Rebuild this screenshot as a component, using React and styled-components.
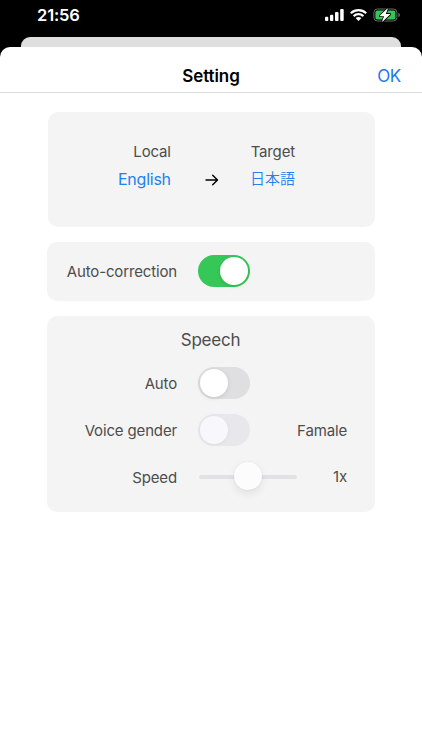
import React, { useState } from "react";
import styled, { createGlobalStyle } from "styled-components";

export default function App() {
  const [correction, setCorrection] = useState(true);
  const [auto, setAuto] = useState(false);

  return (
    <Screen>
      <GlobalStyle />
      <StatusBar>
        <Clock>21:56</Clock>
        <StatusIcons>
          <SignalIcon />
          <WifiIcon />
          <BatteryIcon />
        </StatusIcons>
      </StatusBar>
      <BackSheet />
      <Sheet>
        <Header>
          <Title>Setting</Title>
          <OkButton>OK</OkButton>
        </Header>
        <Cards>
          <LanguageCard>
            <Language>
              <Label>Local</Label>
              <LanguageButton>English</LanguageButton>
            </Language>
            <ArrowIcon />
            <Language>
              <Label>Target</Label>
              <LanguageButton $cjk>日本語</LanguageButton>
            </Language>
          </LanguageCard>

          <CorrectionCard>
            <Row>
              <Label>Auto-correction</Label>
              <Toggle $on={correction} onClick={() => setCorrection(!correction)}>
                <Thumb />
              </Toggle>
            </Row>
          </CorrectionCard>

          <SpeechCard>
            <CardTitle>Speech</CardTitle>
            <Row>
              <Label>Auto</Label>
              <Toggle $on={auto} onClick={() => setAuto(!auto)}>
                <Thumb />
              </Toggle>
            </Row>
            <Row>
              <Label>Voice gender</Label>
              <Toggle disabled>
                <Thumb $disabled />
              </Toggle>
              <Label>Famale</Label>
            </Row>
            <SpeedRow>
              <SpeedLabel>Speed</SpeedLabel>
              <Slider>
                <Knob />
              </Slider>
              <Label>1x</Label>
            </SpeedRow>
          </SpeechCard>
        </Cards>
      </Sheet>
    </Screen>
  );
}

/* icons */
const SignalIcon = () => (
  <svg width="19" height="12" viewBox="0 0 19 12" fill="#fff">
    <rect x="0" y="7.800" width="3.300" height="4.200" rx="1" />
    <rect x="5" y="5.800" width="3.300" height="6.200" rx="1" />
    <rect x="10" y="3" width="3.500" height="9" rx="1" />
    <rect x="15.200" y="0" width="3.500" height="12" rx="1" />
  </svg>
);

const WifiIcon = () => (
  <svg width="17" height="12" viewBox="0 0 17 12" fill="#fff">
    <path d="M8.500 0C5.300 0 2.500 1.200.3 3.200c-.2.2-.2.4 0 .6l1 1c.2.2.4.2.6 0a9.600 9.600 0 0 1 13.200 0c.2.2.4.2.6 0l1-1c.2-.2.2-.4 0-.6A12 12 0 0 0 8.500 0z" />
    <path d="M8.500 4a7.700 7.700 0 0 0-5.300 2.100c-.2.2-.2.4 0 .6l1 1c.2.2.4.2.6 0a5.400 5.400 0 0 1 7.400 0c.2.2.4.2.6 0l1-1c.2-.2.2-.4 0-.6A7.700 7.700 0 0 0 8.500 4z" />
    <path d="M8.500 7.900c-1 0-1.800.4-2.500.9-.2.2-.2.4 0 .6l2.200 2.300c.2.2.4.2.6 0L11 9.400c.2-.2.2-.4 0-.6-.7-.5-1.500-.9-2.500-.9z" />
  </svg>
);

const BatteryIcon = () => (
  <svg width="28" height="14" viewBox="0 0 28 14">
    <rect x=".9" y="1" width="23" height="12" rx="3.500" fill="none" stroke="#6c6c6c" />
    <rect x="2.400" y="2.500" width="20" height="9" rx="2" fill="#33c759" />
    <path d="M25.400 5c1 .4 1.400 1.200 1.400 2s-.4 1.600-1.400 2z" fill="#777" />
    <path
      d="M14 .7 6.900 7.600c-.3.300-.1.700.3.700h3.900l-2 4.900c-.2.500.3.700.6.400l7.400-7c.3-.3.100-.7-.3-.7h-4l2-4.800c.2-.5-.5-.700-.8-.4z"
      fill="#fff"
      stroke="#000"
      strokeWidth="1.600"
      paintOrder="stroke"
    />
  </svg>
);

const ArrowIcon = () => (
  <Arrow width="14" height="12" viewBox="0 0 14 12">
    <path
      d="M1 6h11.500M7.700 1.200 12.500 6l-4.800 4.800"
      fill="none"
      stroke="#000"
      strokeWidth="1.400"
      strokeLinecap="round"
      strokeLinejoin="round"
    />
  </Arrow>
);

const GlobalStyle = createGlobalStyle`
  * {
    box-sizing: border-box;
  }
  body {
    margin: 0;
    background: #000;
    font-family: Inter, "Noto Sans CJK JP", sans-serif;
  }
  button {
    padding: 0;
    border: 0;
    background: none;
    font: inherit;
  }
`;

const Screen = styled.div`
  display: flex;
  flex-direction: column;
  width: 422px;
  height: 750px;
  overflow: hidden;
  background: #000;
`;

const StatusBar = styled.div`
  display: flex;
  justify-content: space-between;
  align-items: center;
  height: 37px;
  padding: 0 21px 7px 37px;
`;

const Clock = styled.div`
  color: #fff;
  font-size: 16.500px;
  font-weight: 600;
  letter-spacing: -0.15px;
`;

const StatusIcons = styled.div`
  display: flex;
  align-items: center;
  gap: 6px;
`;

const BackSheet = styled.div`
  flex: none;
  height: 20px;
  margin: 0 21px -10px;
  border-radius: 9px 9px 0 0;
  background: #dfdfdf;
`;

const Sheet = styled.div`
  flex: 1;
  z-index: 1;
  border-radius: 10px 10px 0 0;
  background: #fff;
`;

const Header = styled.div`
  display: grid;
  grid-template-columns: 1fr auto 1fr;
  align-items: center;
  height: 46px;
  padding: 13px 21px 0;
  border-bottom: 1px solid #dcdcdc;
`;

const Title = styled.div`
  grid-column: 2;
  color: #000;
  font-size: 17px;
  font-weight: 600;
  letter-spacing: -0.1px;
`;

const OkButton = styled.button`
  justify-self: end;
  color: #1e77ee;
  font-size: 17px;
  letter-spacing: -0.3px;
`;

const Cards = styled.div`
  display: flex;
  flex-direction: column;
  gap: 15px;
  padding: 19px 47px 0;
`;

const Card = styled.div`
  border-radius: 10px;
  background: #f4f4f4;
`;

const LanguageCard = styled(Card)`
  display: flex;
  align-items: flex-start;
  height: 115px;
  margin-left: 1px;
  padding: 30px 80px 0 70px;
`;

const Language = styled.div`
  display: flex;
  flex-direction: column;
  align-items: flex-end;
  gap: 7px;
`;

const Label = styled.div`
  color: #4d4d4d;
  font-size: 15px;
  line-height: 20px;
  letter-spacing: -0.15px;
  white-space: nowrap;
`;

const LanguageButton = styled.button`
  color: #267ff0;
  font-size: ${(p) => (p.$cjk ? "15px" : "16px")};
  font-weight: ${(p) => (p.$cjk ? 350 : 400)};
  line-height: 20px;
  letter-spacing: ${(p) => (p.$cjk ? "0" : "-0.25px")};
`;

const Arrow = styled.svg`
  margin: 32px 31px 0 auto;
`;

const CorrectionCard = styled(Card)`
  display: flex;
  flex-direction: column;
  justify-content: center;
  height: 59px;
`;

const SpeechCard = styled(Card)`
  height: 196px;
  padding-top: 13px;
`;

const CardTitle = styled.div`
  margin-bottom: 9px;
  color: #4d4d4d;
  font-size: 17px;
  line-height: 22px;
  letter-spacing: -0.25px;
  text-align: center;
  text-indent: -1px;
`;

const Row = styled.div`
  display: grid;
  grid-template-columns: 130px 100px 28px;
  column-gap: 21px;
  justify-items: end;
  align-items: center;
  height: 47px;
`;

const SpeedRow = styled(Row)`
  height: 45px;
`;

const Toggle = styled.button`
  display: flex;
  align-items: center;
  justify-self: start;
  justify-content: ${(p) => (p.$on ? "flex-end" : "flex-start")};
  width: 52px;
  height: 32px;
  margin-bottom: 1px;
  padding: 2px;
  border-radius: 16px;
  background: ${(p) => (p.disabled ? "#e8e7ec" : p.$on ? "#36c759" : "#dfdfe1")};
`;

const Thumb = styled.span`
  width: 28px;
  height: 28px;
  border-radius: 50%;
  background: ${(p) => (p.$disabled ? "#f8f7fc" : "#fff")};
  box-shadow: 0 1px 4px rgba(0, 0, 0, ${(p) => (p.$disabled ? 0.05 : 0.12)});
`;

const SpeedLabel = styled(Label)`
  padding-top: 2px;
`;

const Slider = styled.div`
  display: flex;
  align-items: center;
  justify-content: center;
  width: 98px;
  height: 4px;
  margin-right: 1px;
  border-radius: 2px;
  background: #e2e2e4;
`;

const Knob = styled.span`
  flex: none;
  width: 28px;
  height: 28px;
  margin-bottom: 2px;
  border-radius: 50%;
  background: #fcfcfc;
  box-shadow: 0 4px 9px rgba(0, 0, 0, 0.08), 0 0 2px rgba(0, 0, 0, 0.07);
`;
